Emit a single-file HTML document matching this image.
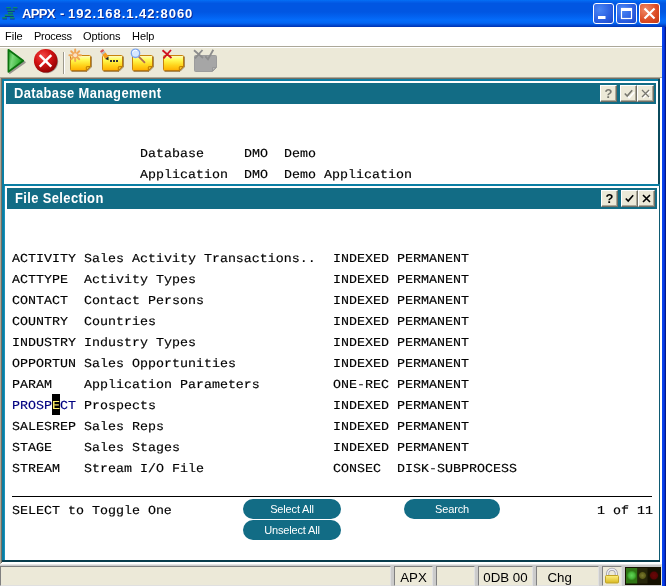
<!DOCTYPE html>
<html><head><meta charset="utf-8"><title>APPX - 192.168.1.42:8060</title>
<style>
html,body{margin:0;padding:0;}
body{width:666px;height:586px;position:relative;overflow:hidden;background:#ece9d8;font-family:"Liberation Sans",sans-serif;}
.abs,.m,#w>div,#w>span{position:absolute;}
#w{position:absolute;left:0;top:0;width:666px;height:586px;overflow:hidden;will-change:transform;}
#title{left:0;top:0;width:666px;height:27px;background:linear-gradient(to bottom,#0370f6 0px,#0462ec 1.5px,#0156e2 3.5px,#0156e2 12px,#0260ee 16px,#046cfa 20px,#0466f2 23px,#024cd4 25px,#0138b8 26.5px,#0138b8 27px);}
.tt{top:6px;color:#fff;font-weight:bold;font-size:13px;line-height:15px;white-space:pre;text-shadow:1px 1px 0 #0a2a9a;}
.tb{top:3px;width:19px;height:19px;border:1px solid #fff;border-radius:3px;background:radial-gradient(circle at 30% 30%,#4a86f5 0%,#2a5ee0 60%,#1c47c8 100%);}
#menu{left:0;top:27px;width:662px;height:19px;background:#fff;}
#menu span{position:absolute;top:3px;font-size:11px;line-height:13px;color:#000;letter-spacing:-0.3px;}
#rb{left:662px;top:27px;width:4px;height:559px;background:linear-gradient(to right,#0848f0 0,#0636e4 55%,#001c9c 80%,#00157a 100%);}
#tool{left:0;top:46px;width:662px;height:31px;background:#ece9d8;border-top:1px solid #aca899;box-sizing:border-box;}
.m{font-family:"Liberation Mono",monospace;font-size:12.2px;line-height:16px;color:#000;white-space:pre;text-rendering:geometricPrecision;transform:scaleX(1.0929);transform-origin:0 0;-webkit-text-stroke:0.15px;}
.nv{color:#000080;}
.cur{color:#fff06a;}
.hd{background:#126c85;color:#fff;font-weight:bold;font-size:14px;letter-spacing:0.4px;line-height:21px;height:21px;white-space:nowrap;}
.hb{position:absolute;width:17px;height:17px;box-sizing:border-box;background:#ece9d8;border:1px solid;border-color:#fff #716f64 #716f64 #fff;box-shadow:inset -1px -1px 0 #aca899;}
.q{position:absolute;left:0;top:0;width:15px;text-align:center;font-size:13px;line-height:15px;letter-spacing:0;font-weight:bold;}
.pill{background:#126c85;color:#fff;font-size:11px;letter-spacing:-0.15px;line-height:20px;height:20px;border-radius:10px;text-align:center;}
.cell{top:566px;height:20px;box-sizing:border-box;background:#ece9d8;border:1px solid;border-color:#808080 #e0e0e0 #e0e0e0 #808080;font-size:13.3px;line-height:21px;color:#000;white-space:nowrap;}
</style></head><body><div id="w">
<div id="title"></div>
<span class="tt" style="left:22px;letter-spacing:-0.7px">APPX</span><span class="tt" style="left:60px">-</span><span class="tt" style="left:68px;letter-spacing:0.95px">192.168.1.42:8060</span>
<div class="tb" style="left:593px"></div>
<div class="tb" style="left:616px"></div>
<div class="tb" style="left:639px;background:radial-gradient(circle at 30% 30%,#f08a68 0%,#dc4a22 60%,#c03a18 100%)"></div>
<div id="menu"><span style="left:5px;letter-spacing:0">File</span><span style="left:34px">Process</span><span style="left:83px;letter-spacing:-0.05px">Options</span><span style="left:132px;letter-spacing:-0.05px">Help</span></div>
<div id="tool"></div><div style="left:0;top:47px;width:662px;height:1px;background:#fff"></div>
<div id="rb"></div>
<svg style="position:absolute;left:0;top:0" width="666" height="80" viewBox="0 0 666 80">
<defs>
<linearGradient id="ng" x1="0" y1="0" x2="0" y2="1"><stop offset="0" stop-color="#fffcc8"/><stop offset="0.3" stop-color="#fffa50"/><stop offset="0.65" stop-color="#ffd41c"/><stop offset="1" stop-color="#ffae00"/></linearGradient>
<radialGradient id="rg" cx="0.38" cy="0.3" r="0.75"><stop offset="0" stop-color="#f04a4a"/><stop offset="0.45" stop-color="#d61414"/><stop offset="1" stop-color="#8a0000"/></radialGradient>
<linearGradient id="gg" x1="0" y1="0" x2="1" y2="0.3"><stop offset="0" stop-color="#1e9a1e"/><stop offset="0.35" stop-color="#7ad87a"/><stop offset="1" stop-color="#1fa81f"/></linearGradient>
<g id="note"><path d="M1.500 0.500H19.500Q20.500 0.500 20.500 1.500V11.500L16.500 15.500H1.500Q0.500 15.500 0.500 14.500V1.500Q0.500 0.500 1.500 0.500Z" fill="url(#ng)" stroke="#c8820c" stroke-width="1"/><path d="M16.300 15.300V12.300Q16.300 11.500 17.200 11.500H20.300Z" fill="#e0a800" stroke="#b87400" stroke-width="0.800" stroke-linejoin="round"/><path d="M17.300 14V12.600H18.800Z" fill="#ffe070"/><path d="M21.300 1.500V12L17 16.300H1.500" fill="none" stroke="#7a4a00" stroke-width="1" opacity="0.75"/></g>
</defs>
<!-- title icon -->
<g stroke="#0a3a98" stroke-width="1.2" fill="none"><path d="M6.500 8.800H11M13.200 8.800H17.500M7.600 11.300H14.800M8.100 13.900H13M4.900 16.500H13.700M2.500 18.900H7M10.100 18.900H14.600"/></g>
<g stroke="#0c8c6c" stroke-width="1.400" fill="none"><path d="M6.300 7.600H10.800M13 7.600H17.300M7.400 10.100H14.600M7.900 12.700H12.800M4.700 15.300H13.500M2.300 17.700H6.800M9.900 17.700H14.400"/></g>
<!-- title buttons glyphs -->
<rect x="598" y="16" width="7.500" height="3" fill="#fff"/>
<rect x="621.500" y="8.500" width="10" height="10" fill="none" stroke="#fff" stroke-width="1.200"/><rect x="621" y="8" width="11" height="3" fill="#fff"/>
<path d="M644.500 8.500L654.500 18.500M654.500 8.500L644.500 18.500" stroke="#fff" stroke-width="2.200" fill="none"/>
<!-- play -->
<path d="M9.800 51.500V73.200L25 62.300Z" fill="#444" stroke="#444" stroke-width="1.500" stroke-linejoin="round" opacity="0.5"/>
<path d="M8.400 49.800V71.800L23.300 60.800Z" fill="url(#gg)" stroke="#0b720e" stroke-width="1.700" stroke-linejoin="round"/>
<!-- stop -->
<circle cx="46.600" cy="61.600" r="11.600" fill="#444" opacity="0.45"/>
<circle cx="45.700" cy="60.800" r="11.800" fill="url(#rg)"/>
<path d="M39.700 55.200L51.300 66.600M51.300 55.200L39.700 66.600" stroke="#fff" stroke-width="2.500" fill="none"/>
<!-- separator -->
<rect x="63" y="52" width="1" height="22" fill="#9d9a8c"/><rect x="64" y="52" width="1" height="22" fill="#fff"/>
<!-- notes -->
<use href="#note" x="70" y="55"/>
<use href="#note" x="102" y="55"/>
<use href="#note" x="132" y="55"/>
<use href="#note" x="163" y="55"/>
<!-- star -->
<g stroke="#f0a658" stroke-width="2" stroke-linecap="round"><path d="M75.200 49.500V61M69.400 55.200H81M71.200 51.200L79.200 59.200M79.200 51.200L71.200 59.200"/></g>
<circle cx="75.200" cy="55.200" r="2" fill="#fbe0c4"/>
<!-- pencil -->
<g transform="translate(99.800,51.200) rotate(-35)"><rect x="0" y="0" width="4" height="2.400" rx="1" fill="#d85050"/><rect x="0" y="2.400" width="4" height="2" fill="#b8b8c0"/><rect x="0" y="4.400" width="4" height="5" fill="#f59a1a"/><path d="M0 9.400H4L2 12.400Z" fill="#222"/></g>
<rect x="110" y="60" width="2" height="2" fill="#333"/><rect x="113" y="60" width="2" height="2" fill="#333"/><rect x="116" y="60" width="2" height="2" fill="#333"/>
<!-- magnifier -->
<path d="M139 56.800L144.500 62.300" stroke="#b06a50" stroke-width="1.800" stroke-linecap="round"/>
<circle cx="135.500" cy="53.300" r="4.200" fill="#d6e7ff" stroke="#7ba4ee" stroke-width="1.300"/><path d="M132.500 52.500A3 3 0 0 1 137 50.700" stroke="#fff" stroke-width="1" fill="none"/>
<!-- red x -->
<path d="M162.500 50.300L171.500 58M171 50L163.500 58.300" stroke="#d01020" stroke-width="1.800" fill="none"/>
<!-- grey note -->
<path d="M195.500 55.500H215.500Q216.500 55.500 216.500 56.500V67.500L212.500 71.500H195.500Q194.500 71.500 194.500 70.500V56.500Q194.500 55.500 195.500 55.500Z" fill="#a6a6a6" stroke="#9c9c9c"/>
<path d="M212.500 71V67.500H216Z" fill="#bababa" stroke="#929292" stroke-width="0.800"/>
<path d="M194 50.300L203 58M202.500 50L195 58.300" stroke="#8c8c8c" stroke-width="1.800" fill="none"/>
<path d="M205.300 56.300L208 59.300L213.300 49.800" stroke="#8c8c8c" stroke-width="1.800" fill="none"/>
</svg>

<!-- panel frame -->
<div style="left:0;top:77px;width:662px;height:488px;background:#fff;"></div>
<div style="left:0;top:77px;width:662px;height:1px;background:#aca899;"></div>
<div style="left:0;top:77px;width:1px;height:487px;background:#aca899;"></div>
<div style="left:1px;top:78px;width:659px;height:1px;background:#716f64;"></div>
<div style="left:1px;top:78px;width:1px;height:485px;background:#716f64;"></div>
<div style="left:2px;top:79px;width:658px;height:2px;background:#0a7ea4;"></div>
<div style="left:2px;top:79px;width:2px;height:483px;background:#0a7ea4;"></div>
<div style="left:4px;top:186px;width:1px;height:376px;background:#1a90b8;"></div>
<div style="left:658px;top:79px;width:2px;height:105px;background:#0b4a5c;"></div>
<div style="left:659px;top:186px;width:1px;height:376px;background:#0f5a72;"></div>
<div style="left:2px;top:560px;width:658px;height:2px;background:#083c4c;"></div>
<div class="hd" style="left:6px;top:83px;width:650px;"><span style="position:absolute;left:8px;transform:scaleX(0.925);transform-origin:0 0">Database Management</span>
 <span class="hb" style="left:594px;top:2px"><b class="q" style="color:#77776f">?</b></span><span class="hb" style="left:614px;top:2px"><svg width="15" height="15" style="position:absolute;left:0;top:0"><path d="M4.800 8.500L7.200 11L12.200 5.200" stroke="#fff" stroke-width="1.500" fill="none" transform="translate(1,1)"/><path d="M3.800 7.500L6.200 10L11.200 4.200" stroke="#77776f" stroke-width="1.600" fill="none"/></svg></span><span class="hb" style="left:631px;top:2px"><svg width="15" height="15" style="position:absolute;left:0;top:0"><path d="M4 4L11 11M11 4L4 11" stroke="#fff" stroke-width="1.500" fill="none" transform="translate(1,1)"/><path d="M4 4L11 11M11 4L4 11" stroke="#77776f" stroke-width="1.3" fill="none"/></svg></span></div>
<div style="left:4px;top:184px;width:656px;height:2px;background:#0a7ea4;"></div>
<div class="hd" style="left:7px;top:188px;width:650px;"><span style="position:absolute;left:8px;transform:scaleX(0.925);transform-origin:0 0">File Selection</span>
 <span class="hb" style="left:594px;top:2px"><b class="q" style="color:#000">?</b></span><span class="hb" style="left:614px;top:2px"><svg width="15" height="15" style="position:absolute;left:0;top:0"><path d="M3.800 7.500L6.200 10L11.200 4.200" stroke="#000" stroke-width="1.600" fill="none"/></svg></span><span class="hb" style="left:631px;top:2px"><svg width="15" height="15" style="position:absolute;left:0;top:0"><path d="M4 4L11 11M11 4L4 11" stroke="#000" stroke-width="1.6" fill="none"/></svg></span></div>
<span class="m " style="left:140px;top:146px">Database</span>
<span class="m " style="left:244px;top:146px">DMO</span>
<span class="m " style="left:284px;top:146px">Demo</span>
<span class="m " style="left:140px;top:167px">Application</span>
<span class="m " style="left:244px;top:167px">DMO</span>
<span class="m " style="left:284px;top:167px">Demo Application</span>
<span class="m " style="left:12px;top:251px">ACTIVITY</span>
<span class="m " style="left:84px;top:251px">Sales Activity Transactions..</span>
<span class="m " style="left:333px;top:251px">INDEXED</span>
<span class="m " style="left:397px;top:251px">PERMANENT</span>
<span class="m " style="left:12px;top:272px">ACTTYPE</span>
<span class="m " style="left:84px;top:272px">Activity Types</span>
<span class="m " style="left:333px;top:272px">INDEXED</span>
<span class="m " style="left:397px;top:272px">PERMANENT</span>
<span class="m " style="left:12px;top:293px">CONTACT</span>
<span class="m " style="left:84px;top:293px">Contact Persons</span>
<span class="m " style="left:333px;top:293px">INDEXED</span>
<span class="m " style="left:397px;top:293px">PERMANENT</span>
<span class="m " style="left:12px;top:314px">COUNTRY</span>
<span class="m " style="left:84px;top:314px">Countries</span>
<span class="m " style="left:333px;top:314px">INDEXED</span>
<span class="m " style="left:397px;top:314px">PERMANENT</span>
<span class="m " style="left:12px;top:335px">INDUSTRY</span>
<span class="m " style="left:84px;top:335px">Industry Types</span>
<span class="m " style="left:333px;top:335px">INDEXED</span>
<span class="m " style="left:397px;top:335px">PERMANENT</span>
<span class="m " style="left:12px;top:356px">OPPORTUN</span>
<span class="m " style="left:84px;top:356px">Sales Opportunities</span>
<span class="m " style="left:333px;top:356px">INDEXED</span>
<span class="m " style="left:397px;top:356px">PERMANENT</span>
<span class="m " style="left:12px;top:377px">PARAM</span>
<span class="m " style="left:84px;top:377px">Application Parameters</span>
<span class="m " style="left:333px;top:377px">ONE-REC</span>
<span class="m " style="left:397px;top:377px">PERMANENT</span>
<div class="abs" style="left:52px;top:394px;width:8px;height:21px;background:#000"></div>
<span class="m nv" style="left:12px;top:398px">PROSP<span class="cur">E</span>CT</span>
<span class="m " style="left:84px;top:398px">Prospects</span>
<span class="m " style="left:333px;top:398px">INDEXED</span>
<span class="m " style="left:397px;top:398px">PERMANENT</span>
<span class="m " style="left:12px;top:419px">SALESREP</span>
<span class="m " style="left:84px;top:419px">Sales Reps</span>
<span class="m " style="left:333px;top:419px">INDEXED</span>
<span class="m " style="left:397px;top:419px">PERMANENT</span>
<span class="m " style="left:12px;top:440px">STAGE</span>
<span class="m " style="left:84px;top:440px">Sales Stages</span>
<span class="m " style="left:333px;top:440px">INDEXED</span>
<span class="m " style="left:397px;top:440px">PERMANENT</span>
<span class="m " style="left:12px;top:461px">STREAM</span>
<span class="m " style="left:84px;top:461px">Stream I/O File</span>
<span class="m " style="left:333px;top:461px">CONSEC</span>
<span class="m " style="left:397px;top:461px">DISK-SUBPROCESS</span>
<span class="m " style="left:12px;top:503px">SELECT to Toggle One</span>
<span class="m " style="left:597px;top:503px">1 of 11</span>
<div style="left:12px;top:496px;width:640px;height:1px;background:#000;"></div>
<div class="pill" style="left:243px;top:499px;width:98px;">Select All</div>
<div class="pill" style="left:243px;top:520px;width:98px;">Unselect All</div>
<div class="pill" style="left:404px;top:499px;width:96px;">Search</div>
<!-- status -->
<div style="left:0;top:564px;width:662px;height:22px;background:#cbcbcb;"></div>
<div style="left:0;top:564px;width:662px;height:1px;background:#e4e4e4;"></div>
<div class="cell" style="left:0px;width:391px;"></div>
<div class="cell" style="left:394px;width:39px;text-align:center;">APX</div>
<div class="cell" style="left:436px;width:39px;"></div>
<div class="cell" style="left:478px;width:55px;text-align:center;">0DB 00</div>
<div class="cell" style="left:536px;width:63px;"><span style="position:absolute;left:10.5px">Chg</span></div>
<div class="cell" style="left:602px;width:20px;"></div>
<div style="left:625px;top:567px;width:36px;height:18px;background:#1a1a00;"></div>
<div style="left:661px;top:564px;width:1px;height:22px;background:#ece9d8;"></div>
<svg style="position:absolute;left:600px;top:564px" width="62" height="22" viewBox="600 564 62 22">
<defs><radialGradient id="lg"><stop offset="0" stop-color="#62d458"/><stop offset="0.6" stop-color="#48b83a"/><stop offset="1" stop-color="#2f7f18"/></radialGradient>
<radialGradient id="ly"><stop offset="0" stop-color="#7a7a30"/><stop offset="0.7" stop-color="#5a5a18"/><stop offset="1" stop-color="#2e2e08" stop-opacity="0"/></radialGradient>
<radialGradient id="lr"><stop offset="0" stop-color="#6a0808"/><stop offset="0.7" stop-color="#5a0404"/><stop offset="1" stop-color="#2a0404" stop-opacity="0"/></radialGradient>
<linearGradient id="lk" x1="0" y1="0" x2="0" y2="1"><stop offset="0" stop-color="#fff080"/><stop offset="1" stop-color="#d8b820"/></linearGradient></defs>
<rect x="625" y="567" width="36" height="18" fill="#141000"/>
<rect x="626" y="568" width="11.500" height="15.500" fill="#2f7514"/>
<circle cx="631.700" cy="575.500" r="4.800" fill="url(#lg)"/>
<rect x="637.500" y="568" width="10" height="15.500" fill="#26260a"/>
<circle cx="642.500" cy="575.500" r="4.300" fill="url(#ly)"/>
<circle cx="654" cy="575.500" r="5" fill="url(#lr)"/>
<path d="M607.700 576V573.500A4.300 4.300 0 0 1 616.300 573.500V576" fill="none" stroke="#9a9aa4" stroke-width="3"/>
<path d="M607.700 576V573.500A4.300 4.300 0 0 1 616.300 573.500V576" fill="none" stroke="#f0f0f6" stroke-width="1.400"/>
<rect x="605.500" y="575.500" width="13" height="7.500" rx="1" fill="url(#lk)" stroke="#c0a428" stroke-width="1"/>
</svg>
</div></body></html>
